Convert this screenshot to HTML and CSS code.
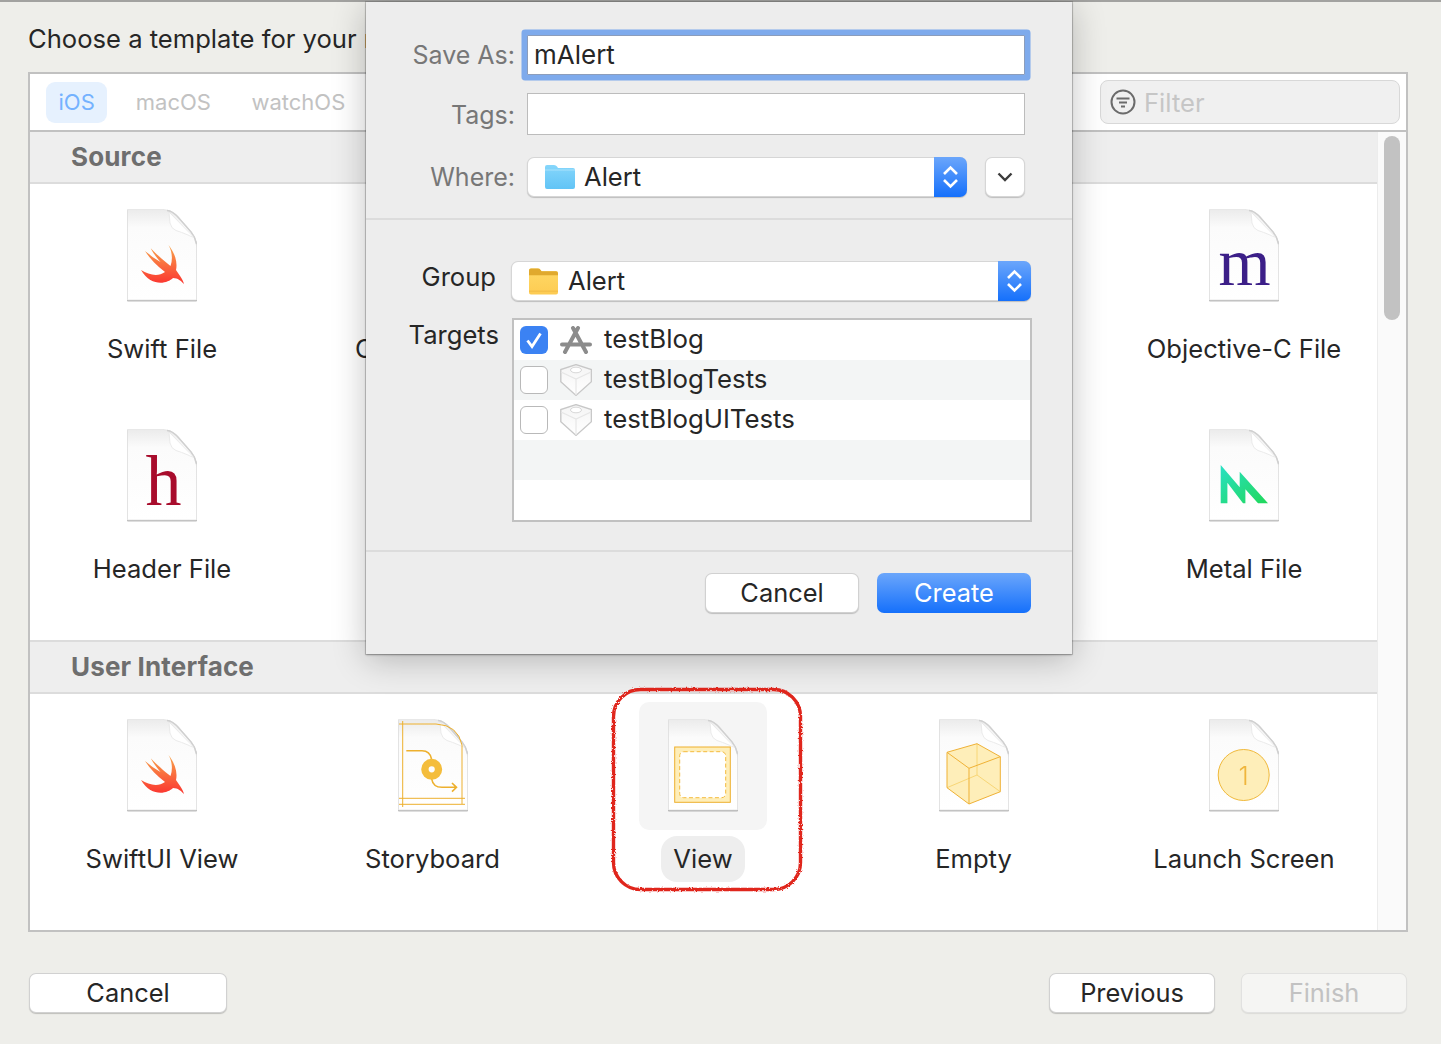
FILE: index.html
```html
<!DOCTYPE html>
<html lang="en">
<head>
<meta charset="utf-8">
<title>Choose a template</title>
<link rel="stylesheet" href="styles.css">
</head>
<body>
<svg class="defs" aria-hidden="true">
  <defs>
    <linearGradient id="pageFill" x1="0" y1="0" x2="0" y2="1"><stop offset="0" stop-color="#ebebeb"/><stop offset=".2" stop-color="#fbfbfb"/><stop offset="1" stop-color="#ffffff"/></linearGradient>
    <linearGradient id="swiftFill" x1="0" y1="0" x2="0" y2="1"><stop offset="0" stop-color="#f8a64c"/><stop offset="1" stop-color="#fb3530"/></linearGradient>
    <linearGradient id="metalFill" x1="0" y1="0" x2="1" y2="1"><stop offset="0" stop-color="#2ae0c4"/><stop offset="1" stop-color="#20d85a"/></linearGradient>
    <linearGradient id="blueFolder" x1="0" y1="0" x2="0" y2="1"><stop offset="0" stop-color="#86d6fb"/><stop offset="1" stop-color="#62c4f6"/></linearGradient>
    <linearGradient id="yellowFolder" x1="0" y1="0" x2="0" y2="1"><stop offset="0" stop-color="#ffd966"/><stop offset="1" stop-color="#fdcb52"/></linearGradient>
    <linearGradient id="brickFill" x1="0" y1="0" x2="0" y2="1"><stop offset="0" stop-color="#f4f4f4"/><stop offset="1" stop-color="#ffffff"/></linearGradient>
    <symbol id="page" viewBox="0 0 70 92">
      <path d="M.4 .4H36Q44 .4 50 6.400L64 22.400Q69.600 29 69.600 38V91H.4Z" fill="url(#pageFill)" stroke="#e3e3e3" stroke-width=".8"/>
      <path d="M40 1.500Q45 2 50 7L64 23Q68 28 69.500 35" fill="none" stroke="#d0d0d0" stroke-width="1.500"/>
      <path d="M42 3L66 27.500Q67 29 61 26Q54 23 49 21.500Q44 19.500 43 14Z" fill="#ffffff" stroke="#e6e6e6" stroke-width=".8"/>
    </symbol>
    <symbol id="swift" viewBox="0 0 70 92">
      <path d="M41.500 36C47 43 51 52 49 61C52 66 56 70 57 75C54 72 51 69 46 69C40 75 24 78 14 61C22 66 31 68 38 63C30 57 23 50 18 42C23 46 28 50 33.500 53C30 49 26 44 23.700 39.300C29 45 37 52 43.500 57C46 50 45 42 41.500 36Z" fill="url(#swiftFill)"/>
    </symbol>
    <symbol id="chev" viewBox="0 0 33 40">
      <path d="M10 17L16.500 10.500L23 17M10 23L16.500 29.500L23 23" fill="none" stroke="#fff" stroke-width="2.600"/>
    </symbol>
    <symbol id="brick" viewBox="0 0 32 32">
      <path d="M16 .6L31.400 5.500V17.700L16 31.400L.8 17.700V5.500Z" fill="url(#brickFill)" stroke="#c8c8c8" stroke-width="1.400"/>
      <path d="M1 8L16 15L31 8M16 15V31" fill="none" stroke="#e6e6e6" stroke-width="1.200"/>
      <ellipse cx="16" cy="6" rx="5.500" ry="2.800" fill="#fff" stroke="#d8d8d8"/>
    </symbol>
  </defs>
</svg>

<div class="window">
  <h1 class="title">Choose a template for your n</h1>

  <section class="panel">
    <div class="tabs">
      <span class="tab tab-active">iOS</span>
      <span class="tab">macOS</span>
      <span class="tab">watchOS</span>
      <div class="filter">
        <svg class="filter-icon" viewBox="0 0 26 26"><circle cx="13" cy="13" r="11.500" fill="none" stroke="#6b6b6b" stroke-width="2"/><path d="M6.500 9.500H19.500M9 13.500H17M11 17.500H15" fill="none" stroke="#6b6b6b" stroke-width="2"/></svg>
        <span class="filter-text">Filter</span>
      </div>
    </div>

    <div class="browser">
      <div class="list">
        <h2 class="section-head section-first">Source</h2>
        <div class="tiles tiles-double">
          <div class="tile">
            <div class="tile-icon"><svg class="file" viewBox="0 0 70 92"><use href="#page"/><use href="#swift"/></svg></div>
            <span class="tile-label">Swift File</span>
          </div>
          <div class="tile">
            <div class="tile-icon"></div>
            <span class="tile-label tile-label-cut">C</span>
          </div>
          <div class="tile"></div>
          <div class="tile"></div>
          <div class="tile">
            <div class="tile-icon"><svg class="file" viewBox="0 0 70 92"><use href="#page"/><text class="glyph glyph-m" x="9.500" y="76">m</text></svg></div>
            <span class="tile-label">Objective-C File</span>
          </div>
          <div class="tile">
            <div class="tile-icon"><svg class="file" viewBox="0 0 70 92"><use href="#page"/><text class="glyph glyph-h" x="18.500" y="76">h</text></svg></div>
            <span class="tile-label">Header File</span>
          </div>
          <div class="tile"></div>
          <div class="tile"></div>
          <div class="tile"></div>
          <div class="tile">
            <div class="tile-icon"><svg class="file" viewBox="0 0 70 92"><use href="#page"/><path d="M11.700 36L30.700 58.300V42.700L59 74.300H49L36.400 60.300V74.300H34L18.400 53.700V74.300H11.700Z" fill="url(#metalFill)"/></svg></div>
            <span class="tile-label">Metal File</span>
          </div>
        </div>

        <h2 class="section-head">User Interface</h2>
        <div class="tiles">
          <div class="tile">
            <div class="tile-icon"><svg class="file" viewBox="0 0 70 92"><use href="#page"/><use href="#swift"/></svg></div>
            <span class="tile-label">SwiftUI View</span>
          </div>
          <div class="tile">
            <div class="tile-icon"><svg class="file" viewBox="0 0 70 92"><use href="#page"/>
              <path d="M1 5H38Q60 6 64 26V85M4.700 2V88M1 79.300H67M1 85.300H67" fill="none" stroke="#edb02e" stroke-width="1"/>
              <path d="M8.300 31.700H24Q32 31.700 33.500 40M33.700 60Q35 68.300 44 68.300H58M54 64L58.500 68.300L54 72.600" fill="none" stroke="#edb02e" stroke-width="1.600"/>
              <circle cx="33.700" cy="50.300" r="6.800" fill="none" stroke="#f4bd3c" stroke-width="7.400"/>
            </svg></div>
            <span class="tile-label">Storyboard</span>
          </div>
          <div class="tile tile-selected">
            <div class="tile-icon"><svg class="file" viewBox="0 0 70 92"><use href="#page"/>
              <rect x="6.700" y="28" width="55.600" height="55.300" fill="#feeeb9" stroke="#edb02e"/>
              <rect x="11.700" y="32.700" width="46" height="46" rx="4" fill="#fff" stroke="#f4bb3d" stroke-dasharray="4 2.500"/>
            </svg></div>
            <span class="tile-label">View</span>
          </div>
          <div class="tile">
            <div class="tile-icon"><svg class="file" viewBox="0 0 70 92"><use href="#page"/>
              <path d="M8 33.300L38 24.700L61.300 37.700V72.700L30 85L8 68.700Z" fill="#feeeb9"/>
              <path d="M38 24.700V56M8 68.700L38 56L61.300 72.700" fill="none" stroke="#f8d676" stroke-width="1"/>
              <path d="M8 33.300L38 24.700L61.300 37.700V72.700L30 85L8 68.700ZM8 33.300L30 49.300L61.300 37.700M30 49.300V85" fill="none" stroke="#efb135" stroke-width="1"/>
            </svg></div>
            <span class="tile-label">Empty</span>
          </div>
          <div class="tile">
            <div class="tile-icon"><svg class="file" viewBox="0 0 70 92"><use href="#page"/>
              <circle cx="34.700" cy="56" r="25.500" fill="#feeeb9" stroke="#f0b93a"/>
              <text class="glyph glyph-one" x="34.700" y="65.500">1</text>
            </svg></div>
            <span class="tile-label">Launch Screen</span>
          </div>
        </div>
      </div>
      <div class="scrollbar"><div class="scroll-thumb"></div></div>
    </div>
  </section>

  <footer class="footer">
    <button class="btn btn-wide">Cancel</button>
    <div class="footer-right">
      <button class="btn btn-mid">Previous</button>
      <button class="btn btn-mid btn-disabled">Finish</button>
    </div>
  </footer>

  <svg class="annotation" viewBox="0 0 202 216" aria-hidden="true">
    <filter id="rough" x="-5%" y="-5%" width="110%" height="110%"><feTurbulence type="fractalNoise" baseFrequency=".6" numOctaves="2" seed="3"/><feDisplacementMap in="SourceGraphic" scale="3"/></filter>
    <rect x="7.500" y="7.500" width="187" height="200" rx="27" fill="none" stroke="#e0261e" stroke-width="3.400" filter="url(#rough)"/>
  </svg>

  <div class="sheet">
    <div class="sheet-top">
      <label class="form-label">Save As:</label>
      <div class="field field-focus">mAlert</div>
      <label class="form-label form-label-tags">Tags:</label>
      <div class="field field-tags"></div>
      <label class="form-label">Where:</label>
      <div class="where">
        <div class="select select-where">
          <svg class="folder folder-blue" viewBox="0 0 30 24"><path d="M0 2Q0 0 2 0H9Q11 0 12 1.500L13 3H28Q30 3 30 5V22Q30 24 28 24H2Q0 24 0 22Z" fill="url(#blueFolder)"/><path d="M0 5H30" stroke="#a9e2fc" stroke-width="1"/></svg>
          <span class="select-text">Alert</span>
          <span class="stepper"><svg class="stepper-icon" viewBox="0 0 33 40"><use href="#chev"/></svg></span>
        </div>
        <button class="disclosure"><svg class="disclosure-icon" viewBox="0 0 16 10"><path d="M1.500 1.500L8 8L14.500 1.500" fill="none" stroke="#3c3c3c" stroke-width="2.400"/></svg></button>
      </div>
    </div>

    <div class="sheet-mid">
      <label class="side-label side-group">Group</label>
      <div class="select select-group">
        <svg class="folder folder-yellow" viewBox="0 0 30 27"><path d="M0 2Q0 0 2 0H9Q11 0 12 1.500L13 3H28Q30 3 30 5V25Q30 27 28 27H2Q0 27 0 25Z" fill="url(#yellowFolder)"/><path d="M0 2Q0 0 2 0H9Q11 0 12 1.500L13 3H28Q30 3 30 5V7H0Z" fill="#e0a92e"/><path d="M0 23.500H30" stroke="#f2bb45" stroke-width="1"/></svg>
        <span class="select-text">Alert</span>
        <span class="stepper"><svg class="stepper-icon" viewBox="0 0 33 40"><use href="#chev"/></svg></span>
      </div>
      <label class="side-label side-targets">Targets</label>
      <div class="targets">
        <div class="target">
          <span class="check check-on"><svg class="check-mark" viewBox="0 0 28 28"><path d="M7.500 14.500L12 20.500L20.500 7.500" fill="none" stroke="#fff" stroke-width="2.800"/></svg></span>
          <svg class="target-icon" viewBox="0 0 32 28"><path d="M2 18.500H30M18 2L5 26M13 2L26 26" fill="none" stroke="#8c8c8c" stroke-width="4" stroke-linecap="round"/></svg>
          <span class="target-name">testBlog</span>
        </div>
        <div class="target">
          <span class="check"></span>
          <svg class="target-icon target-brick" viewBox="0 0 32 32"><use href="#brick"/></svg>
          <span class="target-name">testBlogTests</span>
        </div>
        <div class="target">
          <span class="check"></span>
          <svg class="target-icon target-brick" viewBox="0 0 32 32"><use href="#brick"/></svg>
          <span class="target-name">testBlogUITests</span>
        </div>
        <div class="target"></div>
        <div class="target"></div>
      </div>
    </div>

    <div class="sheet-bottom">
      <button class="btn btn-sheet">Cancel</button>
      <button class="btn btn-sheet btn-primary">Create</button>
    </div>
  </div>
</div>
</body>
</html>
```

FILE: styles.css
```css
* { box-sizing: border-box; }

html, body {
  margin: 0;
  padding: 0;
}

body {
  width: 1441px;
  height: 1044px;
  overflow: hidden;
  background: #eeeeea;
  color: #262626;
  font-family: Inter, "Liberation Sans", sans-serif;
  font-size: 25.600px;
}

.defs {
  position: absolute;
  width: 0;
  height: 0;
}

.window {
  position: relative;
  height: 1044px;
  border-top: 2px solid #a2a2a0;
  padding: 0 33px 0 28px;
}

.title {
  margin: 0;
  padding: 21px 0 17px 0;
  font-size: 25.600px;
  font-weight: 400;
  line-height: 32px;
  white-space: nowrap;
}

.panel {
  width: 1380px;
  height: 860px;
  display: flex;
  flex-direction: column;
  background: #fff;
  border: 2px solid #c1c1c1;
}

.tabs {
  flex: none;
  height: 58px;
  display: flex;
  align-items: center;
  gap: 16.500px;
  padding: 0 6px 0 16px;
  border-bottom: 2px solid #c1c1c1;
}

.tab {
  height: 41px;
  padding: 0 12px;
  border-radius: 9px;
  font-size: 22px;
  line-height: 41px;
  color: #c2c2c2;
}

.tab-active {
  padding: 0 12.500px;
  background: #e6f1fe;
  color: #74b2ff;
}

.filter {
  width: 300px;
  height: 44px;
  margin-left: auto;
  display: flex;
  align-items: center;
  gap: 8px;
  padding-left: 9px;
  background: #f0f0f0;
  border: 1px solid #d8d8d8;
  border-radius: 8px;
}

.filter-icon {
  width: 26px;
  height: 26px;
}

.filter-text {
  font-size: 25.600px;
  color: #c6c6c6;
}

.browser {
  flex: 1;
  min-height: 0;
  display: flex;
}

.list {
  flex: 1;
  min-width: 0;
}

.section-head {
  height: 54px;
  margin: 0;
  padding-left: 41px;
  background: #eeeeee;
  border-top: 2px solid #dcdcdc;
  border-bottom: 2px solid #dcdcdc;
  font-size: 26px;
  font-weight: 700;
  line-height: 50px;
  letter-spacing: .15px;
  color: #6e6e6e;
}

.section-first {
  height: 52px;
  border-top: 0;
}

.tiles {
  display: grid;
  grid-template-columns: repeat(5, 264px);
  grid-auto-rows: 180px;
  column-gap: 6.500px;
  row-gap: 40px;
  padding: 8px 0 48px;
}

.tile {
  display: flex;
  flex-direction: column;
  align-items: center;
  gap: 6px;
}

.tile-icon {
  width: 128px;
  height: 128px;
  padding-top: 17px;
  border-radius: 10px;
}

.file {
  display: block;
  width: 70px;
  height: 92px;
  margin: 0 auto;
  overflow: visible;
  filter: drop-shadow(0 1px .5px rgba(0, 0, 0, .32));
}

.tile-label {
  height: 46px;
  padding: 0 12px;
  border-radius: 16px;
  font-size: 25.600px;
  line-height: 46px;
  white-space: nowrap;
}

.tile-label-cut {
  align-self: flex-start;
  margin-left: 54.500px;
  padding: 0;
}

.tile-selected .tile-icon { background: #f5f5f5; }
.tile-selected .tile-label { background: #eeeeee; }

.glyph { font-family: "Liberation Serif", serif; }
.glyph-m { font-size: 67px; fill: #3c1f88; }
.glyph-h { font-size: 72px; fill: #a80c2c; }
.glyph-one {
  font-family: Inter, sans-serif;
  font-size: 26px;
  font-weight: 300;
  fill: #efb53c;
  text-anchor: middle;
}

.scrollbar {
  flex: none;
  width: 29px;
  padding: 4px 0 0 6px;
  background: #fafafa;
  border-left: 1px solid #ececec;
}

.scroll-thumb {
  width: 16px;
  height: 184px;
  border-radius: 8px;
  background: #c2c2c2;
}

.footer {
  display: flex;
  justify-content: space-between;
  width: 1378px;
  margin: 41px 0 0 1px;
}

.footer-right {
  display: flex;
  gap: 26px;
}

.btn {
  height: 40px;
  padding: 0;
  background: #fff;
  border: 0;
  border-radius: 7px;
  box-shadow: inset 0 0 0 1px rgba(0, 0, 0, .18), 0 1px 1px rgba(0, 0, 0, .2);
  color: #262626;
  font-family: inherit;
  font-size: 25.400px;
  line-height: 40px;
}

.btn-wide { width: 198px; }
.btn-mid { width: 166px; }
.btn-sheet { width: 154px; }

.btn-disabled {
  background: #f5f5f3;
  box-shadow: inset 0 0 0 1px rgba(0, 0, 0, .08), 0 1px 1px rgba(0, 0, 0, .08);
  color: #c2c2c2;
}

.btn-primary {
  background: linear-gradient(#6ba6fb, #1570fb);
  box-shadow: none;
  color: #fff;
}

.annotation {
  position: absolute;
  left: 606px;
  top: 680px;
  width: 202px;
  height: 216px;
}

.sheet {
  position: absolute;
  left: 366px;
  top: 0;
  width: 706px;
  height: 652px;
  background: #ededed;
  box-shadow: 0 0 0 1px rgba(0, 0, 0, .14), 0 1px 2px rgba(0, 0, 0, .3), 0 6px 32px rgba(0, 0, 0, .24);
}

.sheet-top {
  height: 218px;
  display: grid;
  grid-template-columns: 149px 498px;
  column-gap: 12px;
  align-content: start;
  align-items: center;
  row-gap: 18px;
  padding-top: 33px;
  border-bottom: 2px solid #dcdcdc;
}

.form-label {
  text-align: right;
  font-size: 25px;
  color: #777;
}

.form-label-tags { margin-bottom: 3px; }

.field {
  background: #fff;
  font-size: 26px;
}

.field-focus {
  height: 40px;
  padding-left: 6px;
  line-height: 38px;
  border: 1px solid #8c9dbb;
  border-radius: 1px;
  box-shadow: 0 0 0 5.500px #7eaaec;
}

.field-tags {
  height: 42px;
  margin-bottom: 4px;
  border: 1px solid #bcbcbc;
}

.where {
  display: flex;
  gap: 18px;
}

.select {
  height: 40px;
  display: flex;
  align-items: center;
  background: #fff;
  border-radius: 7px;
  box-shadow: inset 0 0 0 1px rgba(0, 0, 0, .16), 0 1px 1px rgba(0, 0, 0, .2);
}

.select-where {
  width: 440px;
  padding-left: 18px;
}

.select-group {
  width: 520px;
  padding-left: 18px;
}

.folder-blue {
  width: 30px;
  height: 24px;
  margin-right: 9px;
}

.folder-yellow {
  width: 29px;
  height: 27px;
  margin-right: 10px;
}

.select-text {
  flex: 1;
  padding-bottom: 1px;
  font-size: 25.600px;
}

.stepper {
  flex: none;
  width: 33px;
  height: 40px;
  background: linear-gradient(#6ba6fb, #1570fb);
  border-radius: 0 7px 7px 0;
}

.stepper-icon {
  display: block;
  width: 33px;
  height: 40px;
}

.disclosure {
  width: 40px;
  height: 40px;
  padding: 0;
  display: flex;
  align-items: center;
  justify-content: center;
  background: #fff;
  border: 0;
  border-radius: 7px;
  box-shadow: inset 0 0 0 1px rgba(0, 0, 0, .16), 0 1px 1px rgba(0, 0, 0, .2);
}

.disclosure-icon {
  width: 16px;
  height: 10px;
}

.sheet-mid {
  height: 332px;
  display: grid;
  grid-template-columns: 133px 520px;
  column-gap: 12px;
  align-content: start;
  row-gap: 17px;
  padding-top: 41px;
  border-bottom: 2px solid #dcdcdc;
}

.side-label {
  font-size: 25.600px;
  line-height: 32px;
  text-align: right;
  color: #262626;
}

.side-group { padding-right: 3px; }
.side-targets { margin-top: 1px; }

.targets {
  width: 520px;
  height: 204px;
  margin-left: 1px;
  background: #fff;
  border: 2px solid #c1c1c1;
}

.target {
  height: 40px;
  display: flex;
  align-items: center;
  padding-left: 6px;
}

.target:nth-child(even) { background: #f3f5f5; }

.check {
  flex: none;
  width: 28px;
  height: 28px;
  background: #fff;
  border: 1px solid #b9b9b9;
  border-radius: 6px;
}

.check-on {
  background: #3b82f3;
  border: 0;
}

.check-mark {
  display: block;
  width: 28px;
  height: 28px;
}

.target-icon {
  flex: none;
  width: 32px;
  height: 28px;
  margin: 0 12px;
}

.target-brick { height: 32px; }

.target-name {
  padding-bottom: 3px;
  font-size: 25.800px;
  white-space: nowrap;
}

.sheet-bottom {
  display: flex;
  justify-content: flex-end;
  gap: 18px;
  padding: 21px 41px 41px 0;
}
```
